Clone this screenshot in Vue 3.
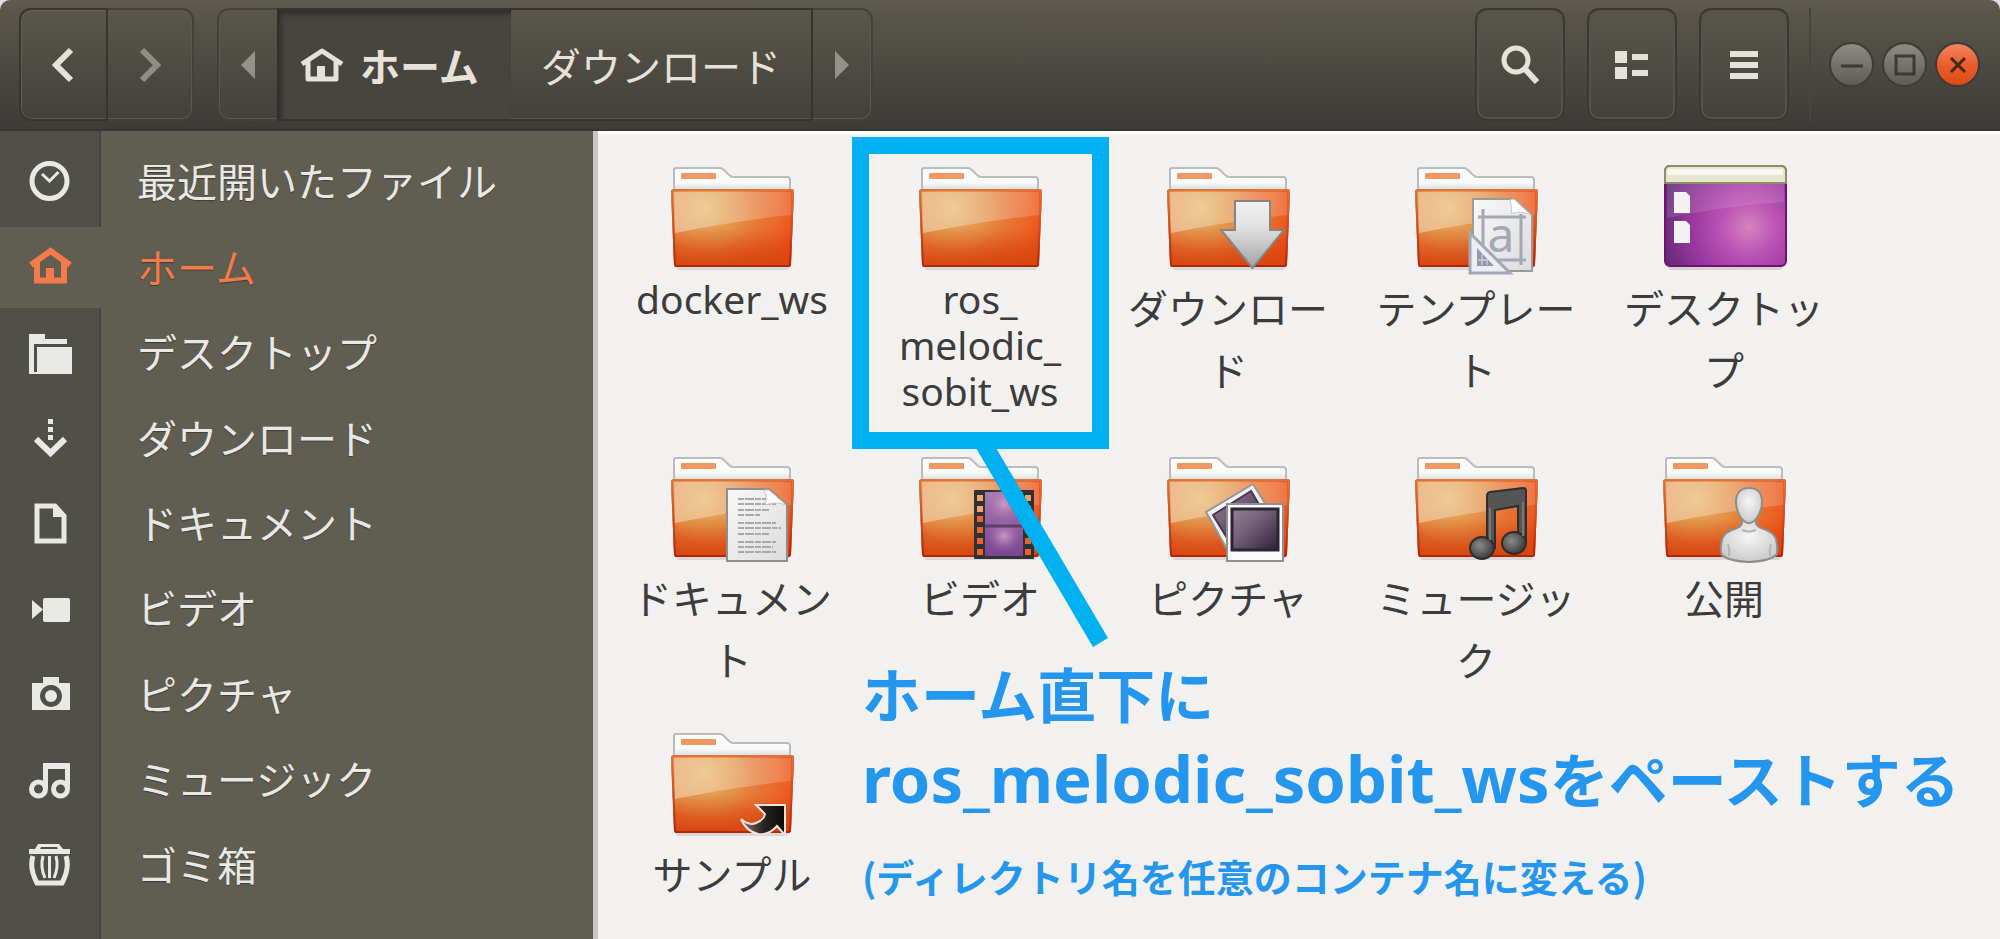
<script setup>
import { ref } from 'vue'

const current = ref('home')

const places = [
  { id: 'recent', label: '最近開いたファイル' },
  { id: 'home', label: 'ホーム' },
  { id: 'desktop', label: 'デスクトップ' },
  { id: 'downloads', label: 'ダウンロード' },
  { id: 'documents', label: 'ドキュメント' },
  { id: 'videos', label: 'ビデオ' },
  { id: 'pictures', label: 'ピクチャ' },
  { id: 'music', label: 'ミュージック' },
  { id: 'trash', label: 'ゴミ箱' },
]

const files = [
  { id: 'docker', label: 'docker_ws', latin: true },
  { id: 'ros', label: 'ros_\nmelodic_\nsobit_ws', latin: true, marked: true },
  { id: 'downloads', label: 'ダウンロー\nド' },
  { id: 'templates', label: 'テンプレー\nト' },
  { id: 'desktop', label: 'デスクトッ\nプ' },
  { id: 'documents', label: 'ドキュメン\nト' },
  { id: 'videos', label: 'ビデオ' },
  { id: 'pictures', label: 'ピクチャ' },
  { id: 'music', label: 'ミュージッ\nク' },
  { id: 'public', label: '公開' },
  { id: 'samples', label: 'サンプル' },
]

const textRows = [
  [49, 29], [54, 38], [60, 31], [65, 22], [73, 38],
  [78, 43], [84, 31], [92, 38], [97, 35], [102, 38],
]
const filmHoles = [45, 56, 66, 77, 88, 99]
</script>

<template>
  <div class="window">
    <svg class="defs" width="0" height="0" aria-hidden="true">
      <defs>
        <linearGradient id="front" x1="0" y1="0" x2="0" y2="1">
          <stop offset="0" stop-color="#e9803f" />
          <stop offset="0.55" stop-color="#e97a35" />
          <stop offset="1" stop-color="#d94a14" />
        </linearGradient>
        <radialGradient id="glow" gradientUnits="userSpaceOnUse" cx="42" cy="48" r="88">
          <stop offset="0" stop-color="#e6b266" />
          <stop offset="0.4" stop-color="#e2934a" stop-opacity="0.85" />
          <stop offset="0.8" stop-color="#ea5a20" stop-opacity="0.5" />
          <stop offset="1" stop-color="#f04a14" stop-opacity="0.8" />
        </radialGradient>
        <linearGradient id="shade" x1="0" y1="0" x2="0" y2="1">
          <stop offset="0.5" stop-color="#d94a14" stop-opacity="0" />
          <stop offset="1" stop-color="#d6440f" stop-opacity="0.9" />
        </linearGradient>
        <linearGradient id="edge" x1="0" y1="0" x2="0" y2="1">
          <stop offset="0" stop-color="#dd7440" />
          <stop offset="1" stop-color="#b42407" />
        </linearGradient>
        <linearGradient id="gloss" x1="0" y1="0" x2="1" y2="0">
          <stop offset="0" stop-color="#fff" stop-opacity="0.38" />
          <stop offset="1" stop-color="#fff" stop-opacity="0.16" />
        </linearGradient>
        <linearGradient id="paper" x1="0" y1="0" x2="0" y2="1">
          <stop offset="0" stop-color="#fff" />
          <stop offset="0.6" stop-color="#fafafa" />
          <stop offset="1" stop-color="#cfd2d4" />
        </linearGradient>
        <linearGradient id="silver" x1="0" y1="0" x2="0" y2="1">
          <stop offset="0" stop-color="#f1f1f1" />
          <stop offset="0.4" stop-color="#e0e0e0" />
          <stop offset="1" stop-color="#a2a2a2" />
        </linearGradient>
        <linearGradient id="sheet" x1="0" y1="0" x2="1" y2="1">
          <stop offset="0" stop-color="#f8f8f8" />
          <stop offset="1" stop-color="#dcdcdc" />
        </linearGradient>
        <radialGradient id="wall" gradientUnits="userSpaceOnUse" cx="93" cy="67" r="92">
          <stop offset="0" stop-color="#d485bd" />
          <stop offset="0.28" stop-color="#bd56b6" />
          <stop offset="0.62" stop-color="#9a38a0" />
          <stop offset="1" stop-color="#5e2a72" />
        </radialGradient>
        <linearGradient id="film" x1="0" y1="0" x2="0" y2="1">
          <stop offset="0" stop-color="#a57ab2" />
          <stop offset="1" stop-color="#7a4490" />
        </linearGradient>
        <radialGradient id="flare">
          <stop offset="0" stop-color="#d8a8cc" stop-opacity="0.8" />
          <stop offset="1" stop-color="#b070b0" stop-opacity="0" />
        </radialGradient>
        <linearGradient id="photo" x1="0" y1="0" x2="1" y2="1">
          <stop offset="0" stop-color="#93808f" />
          <stop offset="0.4" stop-color="#75627a" />
          <stop offset="1" stop-color="#2b2038" />
        </linearGradient>
        <radialGradient id="ball" cx="0.4" cy="0.4" r="0.6">
          <stop offset="0" stop-color="#8a8a8a" />
          <stop offset="1" stop-color="#3e3e3e" />
        </radialGradient>
        <radialGradient id="bust" cx="0.5" cy="0.4" r="0.7">
          <stop offset="0" stop-color="#f6f6f6" />
          <stop offset="1" stop-color="#c4c4c4" />
        </radialGradient>
        <linearGradient id="arrow" x1="0" y1="0" x2="1" y2="0">
          <stop offset="0" stop-color="#8d7a70" />
          <stop offset="0.5" stop-color="#2b2421" />
          <stop offset="1" stop-color="#0c0a0a" />
        </linearGradient>
      </defs>
    </svg>

    <header class="bar">
      <div class="group history">
        <button class="cell back" type="button" aria-label="戻る">
          <svg width="22" height="36" viewBox="0 0 22 36"><path d="M19 3 4 18l15 15" fill="none" stroke="#e6e2da" stroke-width="6" /></svg>
        </button>
        <button class="cell forward" type="button" aria-label="進む" disabled>
          <svg width="22" height="36" viewBox="0 0 22 36"><path d="m3 3 15 15L3 33" fill="none" stroke="#8f8c85" stroke-width="6" /></svg>
        </button>
      </div>

      <nav class="group path" aria-label="パス">
        <button class="cell step" type="button" aria-label="左へ">
          <svg width="14" height="28" viewBox="0 0 14 28"><path d="M14 0v28L0 14z" fill="#94918a" /></svg>
        </button>
        <button class="cell crumb here" type="button">
          <svg width="44" height="36" viewBox="0 0 44 36">
            <path d="M2 17 22 4l20 13M8 14v18h28V14" fill="none" stroke="#e6e2da" stroke-width="5" stroke-linejoin="round" />
            <path d="M17 19h8v14h-8z" fill="#e6e2da" />
          </svg>
          <span>ホーム</span>
        </button>
        <button class="cell crumb next" type="button">ダウンロード</button>
        <button class="cell step" type="button" aria-label="右へ">
          <svg width="14" height="28" viewBox="0 0 14 28"><path d="M0 0v28l14-14z" fill="#94918a" /></svg>
        </button>
      </nav>

      <div class="tools">
        <button class="tool" type="button" aria-label="検索">
          <svg width="38" height="40" viewBox="0 0 38 40">
            <circle cx="15" cy="15" r="12" fill="none" stroke="#e6e2da" stroke-width="5" />
            <path d="m24 24 12 13" stroke="#e6e2da" stroke-width="6" />
          </svg>
        </button>
        <button class="tool" type="button" aria-label="表示">
          <svg width="34" height="28" viewBox="0 0 34 28"><path d="M0 0h12v12H0zM0 16h12v12H0zM17 3h16v6H17zM17 19h16v6H17z" fill="#e6e2da" /></svg>
        </button>
        <button class="tool" type="button" aria-label="メニュー">
          <svg width="28" height="28" viewBox="0 0 28 28"><path d="M0 0h28v6H0zM0 11h28v6H0zM0 22h28v6H0z" fill="#e6e2da" /></svg>
        </button>
      </div>

      <div class="controls">
        <button class="control" type="button" aria-label="最小化">
          <svg width="22" height="22" viewBox="0 0 22 22"><path d="M0 12h22" stroke="#3b3a36" stroke-width="3" /></svg>
        </button>
        <button class="control" type="button" aria-label="最大化">
          <svg width="22" height="22" viewBox="0 0 22 22"><path d="M2 2h18v18H2z" fill="none" stroke="#3b3a36" stroke-width="3" /></svg>
        </button>
        <button class="control close" type="button" aria-label="閉じる">
          <svg width="22" height="22" viewBox="0 0 22 22"><path d="m4 4 14 14M18 4 4 18" stroke="#45290f" stroke-width="3" /></svg>
        </button>
      </div>
    </header>

    <div class="body">
      <nav class="places" aria-label="場所">
        <a
          v-for="place in places"
          :key="place.id"
          href="#"
          class="place"
          :class="{ active: current === place.id }"
          @click.prevent="current = place.id"
        >
          <span class="glyph">
            <svg width="43" height="43" viewBox="0 0 43 43" fill="currentColor" aria-hidden="true">
              <template v-if="place.id === 'recent'">
                <circle cx="20.500" cy="20" r="17.500" fill="none" stroke="currentColor" stroke-width="5" />
                <path d="m13 13 7.500 7 9-9" fill="none" stroke="currentColor" stroke-width="3" />
              </template>
              <template v-else-if="place.id === 'home'">
                <path d="M2 19 21.500 5 41 19M8 16v18.500h27V16" fill="none" stroke="currentColor" stroke-width="6" />
                <path d="M17 22h8v13h-8z" />
              </template>
              <template v-else-if="place.id === 'desktop'">
                <path d="M0 2h16v5h22v5H5v28h38v2H0z" />
                <path d="M8 15h35v27H8z" />
              </template>
              <template v-else-if="place.id === 'downloads'">
                <path d="M19 2h5v5h-5zM19 10h5v5h-5zM19 18h5v5h-5z" />
                <path d="m7 22 14.500 14L36 22" fill="none" stroke="currentColor" stroke-width="6" />
              </template>
              <template v-else-if="place.id === 'documents'">
                <path d="M8 4h18l9 10v25H8z" fill="none" stroke="currentColor" stroke-width="5" />
                <path d="M24 2v13h13z" />
              </template>
              <template v-else-if="place.id === 'videos'">
                <rect x="14" y="10" width="27" height="24" rx="2" />
                <path d="M3 12v19l11-9.500z" />
              </template>
              <template v-else-if="place.id === 'pictures'">
                <path fill-rule="evenodd" d="M14 4h16v6h11v27H3V10h11zM22 12a11 11 0 1 0 .01 0z" />
                <circle cx="22" cy="23" r="6" />
              </template>
              <template v-else-if="place.id === 'music'">
                <path d="M14 4h27v25h-5V10H19v19h-5z" />
                <circle cx="9.500" cy="30" r="7" fill="none" stroke="currentColor" stroke-width="5" />
                <circle cx="31.500" cy="30" r="7" fill="none" stroke="currentColor" stroke-width="5" />
              </template>
              <template v-else>
                <path fill-rule="evenodd" d="M0 5h6l3-5h21l4 5h7v5H0zM12 3l-1 2h18l-1-2z" />
                <path d="M4 12q-4 12 4 27h25q8-15 4-27" fill="none" stroke="currentColor" stroke-width="5" />
                <path d="M14 12q-3 11 2 22M20.500 12v22M27 12q3 11-2 22" fill="none" stroke="currentColor" stroke-width="3" />
              </template>
            </svg>
          </span>
          <span class="name">{{ place.label }}</span>
        </a>
      </nav>

      <main class="files">
        <div v-for="file in files" :key="file.id" class="file" :class="{ latin: file.latin }">
          <svg class="icon" width="136" height="116" viewBox="0 0 136 116" aria-hidden="true">
            <template v-if="file.id === 'desktop'">
              <rect x="12" y="104" width="114" height="6" rx="3" fill="#000" opacity="0.12" />
              <rect x="9" y="6" width="121" height="100" rx="5" fill="url(#wall)" stroke="#74106f" stroke-width="2" />
              <path d="M11 24h117v18Q70 46 11 58z" fill="#fff" opacity="0.12" />
              <path d="M9 23V11q0-5 5-5h111q5 0 5 5v12z" fill="#e6e6d2" stroke="#8e8d66" stroke-width="2" />
              <path d="M12 9h115v6H12z" fill="#f8f8ee" />
              <path d="M18 32h12l4 4v17H18zM18 61h12l4 4v18H18z" fill="#f2f2f2" />
            </template>
            <template v-else>
              <path d="M10 106h117l-4 4H14z" fill="#000" opacity="0.1" />
              <path d="M10 32V10q0-2 2-2h44q2 0 4 2l5 5q2 2 4 2h54q3 0 3 3v12z" fill="url(#paper)" stroke="#b9bcbe" stroke-width="2" />
              <rect x="17" y="13" width="35" height="6" rx="1" fill="#ed9763" />
              <path d="M7 32q0-3 3-3h117q3 0 3 3l-3 72q0 3-3 3H13q-3 0-3-3z" fill="url(#front)" />
              <path d="M7 32q0-3 3-3h117q3 0 3 3l-3 72q0 3-3 3H13q-3 0-3-3z" fill="url(#glow)" />
              <path d="M8 32q0-2 2-2h117q2 0 2 2l-3 72q0 2-2 2H13q-2 0-2-2z" fill="url(#shade)" stroke="url(#edge)" stroke-width="2" />
              <path d="M10 32h117v23Q70 61 11 73z" fill="url(#gloss)" />
            </template>

            <path
              v-if="file.id === 'downloads'"
              d="M75 41h35v29h14l-31.500 38L61 70h14z"
              fill="url(#silver)" stroke="#858585" stroke-width="2"
            />
            <g v-else-if="file.id === 'templates'">
              <path d="M65 39h41l18 16v56H65z" fill="url(#sheet)" stroke="#9b9b9b" stroke-width="2" />
              <path d="M102 40q3 8 1 14 10-4 20 1L106 39z" fill="#fff" stroke="#c8c8c8" />
              <path d="M75 49v48M70 57h48M113 54v51M90 100h28" stroke="#a3a8b5" stroke-width="3" />
              <text x="93" y="92" text-anchor="middle" class="letter">a</text>
              <path d="M62 73v40h40z" fill="#eceef4" stroke="#a3a8b5" stroke-width="3" />
              <path d="M69 88v18h17z" fill="#9298a8" />
              <path d="M74 94v11M79 99v6M70 100h9" stroke="#dfe2ea" />
            </g>
            <g v-else-if="file.id === 'documents'">
              <path d="M63 39h42l18 16v56H63z" fill="url(#sheet)" stroke="#8e8e8e" stroke-width="2" />
              <path
                v-for="[y, w] in textRows" :key="y"
                :d="`M74 ${y}h${w}`" stroke="#a9a9a9" stroke-width="2" stroke-dasharray="6 1 9 1"
              />
              <path d="M100 40q4 8 1 15 12-4 21 0L105 40z" fill="#fbfbfb" stroke="#c4c4c4" />
            </g>
            <g v-else-if="file.id === 'videos'">
              <rect x="62" y="40" width="60" height="69" rx="1" fill="#2f3134" />
              <path d="M73 42h38v64H73z" fill="url(#film)" />
              <circle cx="92" cy="54" r="18" fill="url(#flare)" />
              <circle cx="92" cy="86" r="17" fill="url(#flare)" />
              <path d="M73 76h38" stroke="#5e3f6c" stroke-width="3" />
              <g v-for="(y, i) in filmHoles" :key="y" :class="i < 2 ? 'hole-light' : 'hole'">
                <rect x="65" :y="y" width="6" height="6" />
                <rect x="113" :y="y" width="6" height="6" />
              </g>
            </g>
            <g v-else-if="file.id === 'pictures'">
              <path d="M93 34 46 62l21 37 39-44z" fill="#f1f1f1" stroke="#979797" stroke-width="2" />
              <path d="M91 41 53 65l14 23 33-32z" fill="url(#photo)" stroke="#4a3656" stroke-width="2" />
              <path d="M67 54h56v57H67z" fill="#fafafa" stroke="#8f8f8f" stroke-width="2" />
              <path d="M72 59h46v41H72z" fill="url(#photo)" stroke="#2c2433" stroke-width="3" />
            </g>
            <g v-else-if="file.id === 'music'" stroke="#2e2e2e" stroke-width="2">
              <path d="M79 98V46q0-3 3-4l33-4q3 0 3 3v52h-8V56l-23 4v38z" fill="#555" />
              <ellipse cx="74" cy="98" rx="12" ry="11" fill="url(#ball)" />
              <ellipse cx="106" cy="93" rx="12" ry="11" fill="url(#ball)" />
              <path d="M82 90V58M115 86V52" stroke="#777" />
            </g>
            <g v-else-if="file.id === 'public'" fill="url(#bust)" stroke="#8d8d8d" stroke-width="2">
              <path d="M86 70q1 6-5 8-13 4-15 11-2 8-1 15 6 7 28 8 22-1 28-8 1-8-1-15-2-7-15-11-6-2-5-8z" />
              <path d="M93 38c9 0 13 6 13 14 0 9-6 21-13 21s-13-12-13-21c0-8 4-14 13-14z" />
              <path d="M72 94q2 6 1 12M115 94q-2 6-1 12M86 80q7 3 14 0" fill="none" stroke="#b5b5b5" />
            </g>
            <path
              v-else-if="file.id === 'samples'"
              d="M92 79h29v30l-8-9q-9 10-19 8-12-3-17-15 8 7 15 4 8-3 9-9z"
              fill="url(#arrow)" stroke="#f5e4dc" stroke-width="2"
            />
          </svg>
          <span class="label">{{ file.label }}</span>
          <template v-if="file.marked">
            <span class="frame"></span>
            <svg class="pointer" width="136" height="200" viewBox="0 0 136 200" aria-hidden="true">
              <path d="M0 0h20l112 190-15 9z" fill="#00b0f0" />
            </svg>
          </template>
        </div>

        <div class="note">
          <p class="big">ホーム直下に</p>
          <p class="big"><span class="code">ros_melodic_sobit_ws</span>をペーストする</p>
          <p class="small">(ディレクトリ名を任意のコンテナ名に変える)</p>
        </div>
      </main>
    </div>
  </div>
</template>

<style>
body {
  margin: 0;
  background: #dcdde6;
}
</style>

<style scoped>
.window {
  display: flex;
  flex-direction: column;
  min-height: 100vh;
  font-family: "Noto Sans CJK JP", "Noto Sans", sans-serif;
  font-size: 40px;
}
.defs {
  position: absolute;
}
svg {
  display: block;
  flex: none;
}
button {
  display: flex;
  align-items: center;
  justify-content: center;
  box-sizing: border-box;
  margin: 0;
  padding: 0;
  border: 0;
  background: none;
  color: #e6e2da;
  font: inherit;
}

.bar {
  display: flex;
  align-items: stretch;
  box-sizing: border-box;
  height: 131px;
  padding: 8px 20px 8px 19px;
  border-bottom: 2px solid #353430;
  border-radius: 10px 10px 0 0;
  background: linear-gradient(#605d50, #5a564c 8%, #3c3b37);
}
.group {
  display: flex;
  box-sizing: border-box;
  border: 2px solid #42413b;
  border-radius: 12px;
  background: linear-gradient(#5a564c, #42413b);
  box-shadow: inset 0 0 0 1px #5b584e;
}
.history {
  width: 175px;
}
.history .cell {
  flex: 1;
}
.back {
  margin: -2px 0 -2px -2px;
  border: 2px solid #363530;
  border-radius: 12px 0 0 12px;
  box-shadow: inset 1px 1px 0 #625f54;
}
.path {
  margin-left: 23px;
}
.step {
  width: 58px;
}
.crumb {
  margin: -2px 0;
  border: solid #35342f;
  border-width: 2px 0;
}
.here {
  justify-content: flex-start;
  gap: 16px;
  width: 234px;
  padding-left: 23px;
  background: #464540;
  box-shadow: inset 4px 4px 5px #2f2e2a;
  font-weight: 700;
}
.next {
  width: 302px;
  border-right-width: 2px;
}
.tools {
  display: flex;
  gap: 22px;
  margin-left: auto;
}
.tool {
  width: 90px;
  border: 2px solid #393834;
  border-radius: 12px;
  background: linear-gradient(#5a564c, #42413b);
  box-shadow: inset 0 0 0 2px #55534a;
}
.controls {
  display: flex;
  align-items: center;
  gap: 8px;
  margin-left: 20px;
  padding-left: 18px;
  border-left: 2px solid #46453f;
}
.control {
  width: 45px;
  height: 45px;
  border: 2px solid #3d3c38;
  border-radius: 50%;
  background: linear-gradient(#8c8b84, #5d5c56);
}
.close {
  background: linear-gradient(#f58560, #e95e2c 50%, #df4813);
}

.body {
  display: flex;
  flex: 1;
}
.places {
  display: flex;
  flex-direction: column;
  gap: 5px;
  box-sizing: border-box;
  width: 598px;
  flex: none;
  padding: 11px 0 33px;
  border-right: 5px solid #c9c6c4;
  background: linear-gradient(90deg, #504f48 99px, #45443e 99px, #45443e 101px, #605d51 101px);
}
.place {
  display: flex;
  flex: 1;
  align-items: center;
  color: #e8e8e6;
  text-decoration: none;
}
.active {
  background: #605d51;
  color: #f47a4a;
}
.glyph {
  box-sizing: border-box;
  width: 101px;
  padding-left: 29px;
}
.name {
  padding: 0 0 4px 36px;
  line-height: 60px;
  text-shadow: 0 1px 1px rgba(0, 0, 0, 0.35);
}

.files {
  position: relative;
  display: grid;
  grid-template-columns: repeat(auto-fill, 248px);
  align-content: start;
  row-gap: 36px;
  flex: 1;
  box-sizing: border-box;
  padding: 26px 0 0 10px;
  border-top: 3px solid #fff;
  background: #f2f1f0;
  color: #3c3c3c;
}
.file {
  position: relative;
  display: flex;
  flex-direction: column;
  align-items: center;
}
.label {
  line-height: 62px;
  text-align: center;
  white-space: pre-line;
}
.latin .label {
  font-family: "Noto Sans", "Open Sans", sans-serif;
  font-size: 39px;
  line-height: 46px;
}
.letter {
  fill: #a3a8b5;
  font-family: "Noto Sans", sans-serif;
  font-size: 48px;
}
.hole {
  fill: #e8622c;
}
.hole-light {
  fill: #f0a468;
}

.frame {
  position: absolute;
  z-index: 1;
  top: -23px;
  left: -4px;
  box-sizing: border-box;
  width: 257px;
  height: 312px;
  border: 17px solid #00b0f0;
}
.pointer {
  position: absolute;
  z-index: 1;
  top: 288px;
  left: 120px;
}
.note {
  position: absolute;
  top: 516px;
  left: 264px;
  color: #2596ee;
  font-weight: 700;
  white-space: nowrap;
}
.note p {
  margin: 0;
}
.note .big {
  font-size: 59px;
  line-height: 85px;
}
.note .small {
  margin-top: 26px;
  font-size: 38px;
  line-height: 60px;
}
.code {
  font-family: "Noto Sans", "Open Sans", sans-serif;
  font-size: 65px;
  line-height: 60px;
}
</style>
